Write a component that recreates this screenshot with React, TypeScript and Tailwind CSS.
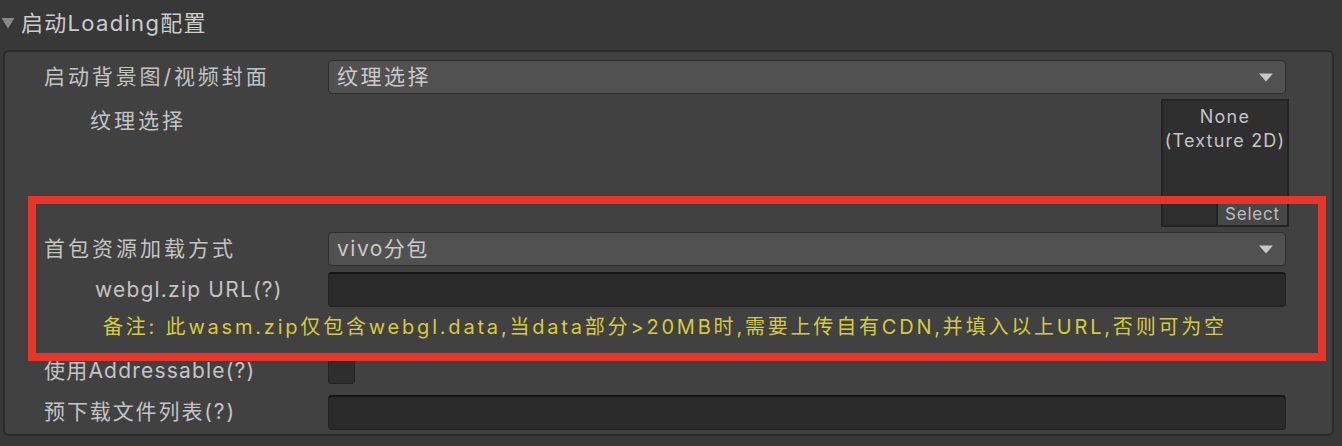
import React from "react";

const font = "font-['Inter','Noto_Sans_CJK_SC',sans-serif]";

function Arrow() {
  return (
    <svg width="16" height="9" viewBox="0 0 16 9" className="shrink-0">
      <path d="M1 0.5 H15 L8 8.5 Z" fill="#c8c8c8" />
    </svg>
  );
}

function Dropdown({ value, track }: { value: string; track: string }) {
  return (
    <div className="flex h-[34px] w-[958px] items-center justify-between rounded-[4px] border border-[#2e2e2e] bg-[#515151] pl-[8px] pr-[11px]">
      <span className={`text-[21px] text-[#cacaca] ${track}`}>{value}</span>
      <Arrow />
    </div>
  );
}

function TextField() {
  return <div className="h-[35px] w-[958px] rounded-[4px] border border-[#222] border-t-2 border-t-[#141414] bg-[#2a2a2a]" />;
}

export default function App() {
  return (
    <div className={`relative h-[446px] w-[1342px] overflow-hidden bg-[#383838] ${font} text-[#c4c4c4]`}>
      {/* header */}
      <div className="flex h-[50px] items-center gap-[6px] pl-[1px] pb-[4px]">
        <svg width="14" height="12" viewBox="0 0 14 12">
          <path d="M0.5 1 H13.5 L7 11.5 Z" fill="#8a8a8a" />
        </svg>
        <span className="text-[22px] tracking-[1.3px] text-[#cccccc]">启动Loading配置</span>
      </div>

      {/* panel */}
      <div className="ml-[3px] h-[386px] w-[1331px] rounded-[6px] border-2 border-[#2b2b2b] bg-[#414141]">
        <div className="flex items-center pt-[8px]">
          <div className="w-[323px] pl-[39px] text-[21px] tracking-[2.9px]">启动背景图/视频封面</div>
          <Dropdown value="纹理选择" track="tracking-[2.5px]" />
        </div>

        <div className="mt-[5px] flex">
          <div className="w-[1156px] pl-[85px] pt-[6px] text-[21px] tracking-[3px]">纹理选择</div>
          <div className="relative h-[128px] w-[128px] border-2 border-[#242424] bg-[#2f2f2f] text-center text-[18px] leading-[24px] tracking-[1.2px]">
            <div className="pt-[4px]">None</div>
            <div className="-mx-[4px]">(Texture 2D)</div>
            <div className="absolute bottom-0 right-0 flex h-[22px] w-[71px] items-center justify-center border-l-2 border-[#222] bg-[#474747] text-[17px] tracking-[0.8px] text-[#bdbdbd]">
              Select
            </div>
          </div>
        </div>

        <div className="mt-[5px] flex items-center">
          <div className="w-[323px] pl-[39px] text-[21px] tracking-[3px]">首包资源加载方式</div>
          <Dropdown value="vivo分包" track="tracking-[1.5px]" />
        </div>

        <div className="mt-[6px] flex items-center">
          <div className="w-[323px] pl-[90px] text-[21px] tracking-[1.2px]">webgl.zip URL(?)</div>
          <TextField />
        </div>

        <div className="h-[43px] pl-[98px] pt-[5px] text-[20px] tracking-[2.8px] text-[#d6cb3e]">
          备注: 此wasm.zip仅包含webgl.data,当data部分&gt;20MB时,需要上传自有CDN,并填入以上URL,否则可为空
        </div>

        <div className="mt-[5px] flex items-center">
          <div className="w-[323px] pl-[39px] text-[21px] tracking-[1.2px]">使用Addressable(?)</div>
          <div className="h-[27px] w-[27px] rounded-[3px] border border-[#232323] bg-[#2e2e2e]" />
        </div>

        <div className="mt-[8px] flex items-center">
          <div className="w-[323px] pl-[39px] text-[21px] tracking-[1.9px]">预下载文件列表(?)</div>
          <TextField />
        </div>
      </div>

      {/* annotation */}
      <div className="absolute left-[28px] top-[196px] h-[165px] w-[1298px] border-[8px] border-[#e8352a]" />
    </div>
  );
}
